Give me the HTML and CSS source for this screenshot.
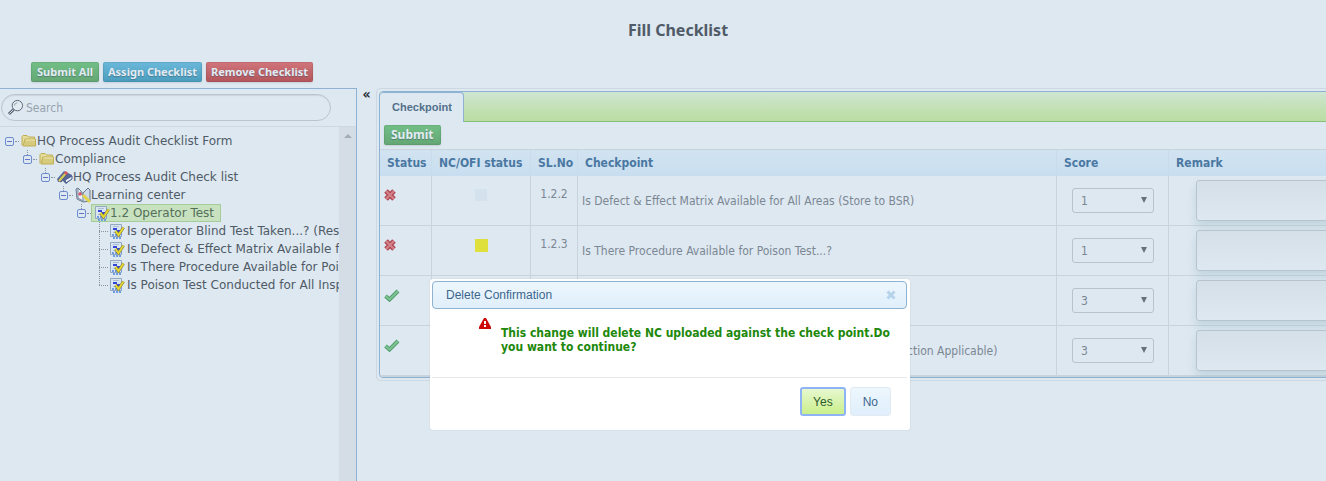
FILE: index.html
```html
<!DOCTYPE html>
<html lang="en">
<head>
    <meta charset="UTF-8">
    <meta name="viewport" content="width=device-width, initial-scale=1.0">
    <title>Fill Checklist</title>
    <link rel="stylesheet" href="styles.css">
</head>
<body>
    <!-- icon shapes shared by the tree and the table -->
    <svg class="sprite" aria-hidden="true">
        <symbol id="folder" viewBox="0 0 16 16">
            <path d="M1 12.500V3.500L2 2.500H6L7.500 4H13.500V6" fill="#e4dc9a" stroke="#bfae55"/>
            <path d="M2 13L4 6H14.500V13Z" fill="#d6ca7c" stroke="#bfae55"/>
            <path d="M4.500 7H14" stroke="#efe8b4"/>
        </symbol>
        <symbol id="book" viewBox="0 0 16 16">
            <path d="M0 10L7 2L15 6V10L9 15L6 12L1 13Z" fill="#596a9a"/>
            <path d="M8 11L15 7V10L9 14Z" fill="#e8edf4" stroke="#47598a"/>
            <path d="M1 11L8 4L10 5L4 13Z" fill="#7583a9" stroke="#505c78"/>
            <path d="M2 12L9 4" stroke="#d9cc56" stroke-width="2"/>
            <path d="M8 5L10 3" stroke="#d9535e" stroke-width="3"/>
        </symbol>
        <symbol id="openbook" viewBox="0 0 16 16">
            <path d="M1 2L3 1L8 6L13 1L15 3V14L8 15L2 12Z" fill="#cbd9e8" stroke="#69788e"/>
            <path d="M3 2V11L8 14V6" fill="#e8eff6" stroke="#7b8ba1"/>
            <path d="M5 5L11 11" stroke="#8b939d" stroke-width="2"/>
            <path d="M8 8L15 15" stroke="#e2d34a" stroke-width="3"/>
            <path d="M4 6L6 8" stroke="#dd5566" stroke-width="3"/>
        </symbol>
        <symbol id="check" viewBox="0 0 16 16">
            <path d="M1.500 1.500H12.500V13.500H1.500Z" fill="#d9e6f2" stroke="#93a9c1"/>
            <path d="M4 3.500H10M4 9.500H9" stroke="#a9bed4"/>
            <path d="M4 6H8M8 8H11" stroke="#3345d8" stroke-width="2"/>
            <path d="M3 12H13M4 15H12" stroke="#6f9be2" stroke-width="2" stroke-dasharray="2 1"/>
            <path d="M6.500 8L9.500 12L14.500 4.500" fill="none" stroke="#77743a" stroke-width="3"/>
            <path d="M6.500 8L9.500 12L14.500 4.500" fill="none" stroke="#e5d631" stroke-width="2"/>
        </symbol>
        <symbol id="cross" viewBox="0 0 12 12">
            <path d="M2 2L10 10M10 2L2 10" stroke="#b04a55" stroke-width="5"/>
            <path d="M2 2L10 10M10 2L2 10" stroke="#d5838a" stroke-width="2"/>
        </symbol>
        <symbol id="tick" viewBox="0 0 16 13">
            <path d="M1.500 7L5.500 10.500L14 2" fill="none" stroke="#559d70" stroke-width="4"/>
            <path d="M1.500 7L5.500 10.500L14 2" fill="none" stroke="#7cc592" stroke-width="2"/>
        </symbol>
    </svg>

    <div class="page">
        <h1>Fill Checklist</h1>

        <div class="actions">
            <button type="button" class="btn green">Submit All</button>
            <button type="button" class="btn blue">Assign Checklist</button>
            <button type="button" class="btn red">Remove Checklist</button>
        </div>

        <div class="layout">
            <aside class="sidebar">
                <div class="search">
                    <label for="search" aria-label="Search">
                        <svg class="lens" viewBox="0 0 18 18">
                            <circle cx="11" cy="7" r="5.500" fill="#e3ebf2" stroke="#566270"/>
                            <path d="M8 7Q8 4 11 4" fill="none" stroke="#8c99a6"/>
                            <path d="M7 11L2 16" stroke="#566270" stroke-width="3"/>
                            <path d="M6.500 11.500L2.500 15.500" stroke="#dee8f1"/>
                        </svg>
                    </label>
                    <input type="text" id="search" placeholder="Search">
                </div>
                <div class="tree-area">
                    <ul class="tree">
                        <li>
                            <div class="node"><button type="button" class="toggle" aria-label="Collapse"></button><svg class="icon"><use href="#folder"/></svg><span>HQ Process Audit Checklist Form</span></div>
                            <ul>
                                <li>
                                    <div class="node"><button type="button" class="toggle" aria-label="Collapse"></button><svg class="icon"><use href="#folder"/></svg><span>Compliance</span></div>
                                    <ul>
                                        <li>
                                            <div class="node"><button type="button" class="toggle" aria-label="Collapse"></button><svg class="icon"><use href="#book"/></svg><span>HQ Process Audit Check list</span></div>
                                            <ul>
                                                <li>
                                                    <div class="node"><button type="button" class="toggle" aria-label="Collapse"></button><svg class="icon"><use href="#openbook"/></svg><span>Learning center</span></div>
                                                    <ul>
                                                        <li>
                                                            <div class="node"><button type="button" class="toggle" aria-label="Collapse"></button><div class="selected"><svg class="icon"><use href="#check"/></svg><span>1.2 Operator Test</span></div></div>
                                                            <ul class="leaves">
                                                                <li class="node"><svg class="icon"><use href="#check"/></svg><span>Is operator Blind Test Taken...? (Result)</span></li>
                                                                <li class="node"><svg class="icon"><use href="#check"/></svg><span>Is Defect &amp; Effect Matrix Available for All Areas</span></li>
                                                                <li class="node"><svg class="icon"><use href="#check"/></svg><span>Is There Procedure Available for Poison Test...?</span></li>
                                                                <li class="node"><svg class="icon"><use href="#check"/></svg><span>Is Poison Test Conducted for All Inspectors</span></li>
                                                            </ul>
                                                        </li>
                                                    </ul>
                                                </li>
                                            </ul>
                                        </li>
                                    </ul>
                                </li>
                            </ul>
                        </li>
                    </ul>
                    <div class="scrollbar"><svg viewBox="0 0 8 4"><path d="M0 4L4 0L8 4Z" fill="#a3adb7"/></svg></div>
                </div>
            </aside>

            <button type="button" class="collapse" aria-label="Collapse panel">&laquo;</button>

            <main class="panel">
                <div class="panel-inner">
                    <div class="tabs"><a href="#checkpoints" class="tab">Checkpoint</a></div>
                    <div class="toolbar"><button type="button" class="btn green submit">Submit</button></div>
                    <table id="checkpoints">
                        <thead>
                            <tr>
                                <th class="col-status">Status</th>
                                <th class="col-nc">NC/OFI status</th>
                                <th class="col-no">SL.No</th>
                                <th class="col-point">Checkpoint</th>
                                <th class="col-score">Score</th>
                                <th>Remark</th>
                            </tr>
                        </thead>
                        <tbody>
                            <tr>
                                <td class="status"><svg class="cross"><use href="#cross"/></svg></td>
                                <td class="nc"><span class="flag"></span></td>
                                <td class="no">1.2.2</td>
                                <td>Is Defect &amp; Effect Matrix Available for All Areas (Store to BSR)</td>
                                <td class="score"><select aria-label="Score"><option>1</option><option>3</option></select></td>
                                <td class="remark"><textarea aria-label="Remark"></textarea></td>
                            </tr>
                            <tr>
                                <td class="status"><svg class="cross"><use href="#cross"/></svg></td>
                                <td class="nc"><span class="flag yellow"></span></td>
                                <td class="no">1.2.3</td>
                                <td>Is There Procedure Available for Poison Test...?</td>
                                <td class="score"><select aria-label="Score"><option>1</option><option>3</option></select></td>
                                <td class="remark"><textarea aria-label="Remark"></textarea></td>
                            </tr>
                            <tr>
                                <td class="status"><svg class="tick"><use href="#tick"/></svg></td>
                                <td class="nc"></td>
                                <td class="no"></td>
                                <td></td>
                                <td class="score"><select aria-label="Score"><option>3</option><option>1</option></select></td>
                                <td class="remark"><textarea aria-label="Remark"></textarea></td>
                            </tr>
                            <tr>
                                <td class="status"><svg class="tick"><use href="#tick"/></svg></td>
                                <td class="nc"></td>
                                <td class="no"></td>
                                <td>Is Poison Test Conducted for All Inspectors (Result and Correction Applicable)</td>
                                <td class="score"><select aria-label="Score"><option>3</option><option>1</option></select></td>
                                <td class="remark"><textarea aria-label="Remark"></textarea></td>
                            </tr>
                        </tbody>
                    </table>
                </div>
            </main>
        </div>
    </div>

    <div class="dialog" role="dialog" aria-labelledby="dialogTitle">
        <div class="dialog-title">
            <span id="dialogTitle">Delete Confirmation</span>
            <button type="button" class="close" aria-label="Close">
                <svg viewBox="0 0 10 10"><path d="M1.500 1.500L8.500 8.500M8.500 1.500L1.500 8.500" stroke="#b5d3ea" stroke-width="3"/></svg>
            </button>
        </div>
        <div class="dialog-body">
            <svg class="alert" viewBox="0 0 12 11">
                <path d="M5 0H7L12 9V11H0V9Z" fill="#cd0a0a"/>
                <path d="M5 3H7V6H5ZM5 7H7V9H5Z" fill="#fff"/>
            </svg>
            <p>This change will delete NC uploaded against the check point.Do you want to continue?</p>
        </div>
        <div class="dialog-buttons">
            <button type="button" class="yes">Yes</button>
            <button type="button" class="no-btn">No</button>
        </div>
    </div>
</body>
</html>
```
FILE: styles.css
```css
* {
    box-sizing: border-box;
}

body {
    margin: 0;
    height: 100vh;
    overflow: hidden;
    background-color: #dee8f1;
    color: #4f5b67;
    font-family: "DejaVu Sans Condensed", "DejaVu Sans", Tahoma, sans-serif;
    font-stretch: condensed;
    font-size: 12px;
}

button, input, select, textarea {
    font: inherit;
    color: inherit;
}

button {
    cursor: pointer;
}

.sprite {
    display: none;
}

/* the page runs a little wider than the window */
.page {
    display: flex;
    flex-direction: column;
    width: calc(100% + 30px);
    height: 100%;
}

h1 {
    margin: 0;
    padding: 20px 0 22px;
    font-family: "Noto Sans", sans-serif;
    font-size: 16px;
    line-height: 20px;
    text-align: center;
}

.actions {
    display: flex;
    gap: 4px;
    padding: 0 31px 6px;
}

.btn {
    height: 20px;
    padding: 0 5px;
    border: none;
    border-radius: 2px;
    color: #e2ebf3;
    font-family: "Noto Sans", sans-serif;
    font-stretch: normal;
    font-size: 11px;
    font-weight: bold;
    line-height: 20px;
    text-shadow: 0 1px 1px rgba(60, 80, 100, 0.5);
    box-shadow: inset 0 0 1px 1px rgba(0, 0, 0, 0.08), 0 1px 2px rgba(0, 0, 0, 0.1);
}

.green {
    background: linear-gradient(#72bf87, #64a774);
}

.actions .green {
    padding: 0 6px;
}

.blue {
    background: linear-gradient(#6bb9da, #4a9dbd);
}

.red {
    background: linear-gradient(#d0757b, #b3565c);
}

.layout {
    display: flex;
    flex: 1;
    align-items: flex-start;
    min-height: 0;
}

/* sidebar */
.sidebar {
    display: flex;
    flex-direction: column;
    flex: 0 0 357px;
    min-width: 0;
    height: 100%;
    border-top: 1px solid #8db2d2;
    border-right: 1px solid #8db2d2;
}

.search {
    display: flex;
    align-items: center;
    height: 27px;
    margin: 5px 25px 5px 1px;
    padding-left: 5px;
    border: 1px solid #b9c4cf;
    border-radius: 14px;
    box-shadow: inset 0 1px 1px rgba(0, 0, 0, 0.08);
}

.lens {
    display: block;
    width: 17px;
    height: 17px;
}

.search input {
    flex: 1;
    min-width: 0;
    padding: 0 2px;
    border: none;
    outline: none;
    background: none;
}

.search input::placeholder {
    color: #97a3ae;
}

.tree-area {
    display: flex;
    flex: 1;
    min-height: 0;
    border-top: 1px solid #cdd8e1;
}

ul {
    margin: 0;
    padding: 0;
    list-style: none;
}

.tree {
    flex: 1;
    min-width: 0;
    padding: 5px 0 0 5px;
    overflow: hidden;
    font-family: "DejaVu Sans", Verdana, sans-serif;
    font-stretch: normal;
}

.tree ul {
    padding-left: 18px;
}

.node {
    display: flex;
    align-items: center;
    height: 18px;
    white-space: nowrap;
}

.icon {
    flex: none;
    width: 16px;
    height: 16px;
}

.toggle {
    position: relative;
    flex: none;
    width: 9px;
    height: 9px;
    margin-right: 7px;
    padding: 0;
    border: 1px solid #6d8bd0;
    border-radius: 2px;
    background: linear-gradient(#6475c8, #6475c8) center / 5px 1px no-repeat;
}

/* dotted connector lines */
.toggle::after {
    content: "";
    position: absolute;
    left: 9px;
    top: 3px;
    width: 4px;
    border-top: 1px dotted #8a949e;
}

.tree ul .toggle::before {
    content: "";
    position: absolute;
    left: 3px;
    top: -6px;
    height: 5px;
    border-left: 1px dotted #8a949e;
}

.selected {
    display: flex;
    align-items: center;
    height: 18px;
    margin-left: -2px;
    padding: 0 6px 0 2px;
    border: 1px solid #a5cd9b;
    background-color: #c8e2c0;
    color: #55705a;
}

.tree .leaves {
    padding-left: 22px;
}

.leaves .node {
    gap: 2px;
    background:
        repeating-linear-gradient(90deg, #8a949e 0 1px, transparent 1px 2px) 0 9px / 10px 1px no-repeat,
        repeating-linear-gradient(#8a949e 0 1px, transparent 1px 2px) 0 0 / 1px 100% no-repeat;
    padding-left: 10px;
}

.leaves .node:last-child {
    background-size: 10px 1px, 1px 9px;
}

.scrollbar {
    display: flex;
    justify-content: center;
    flex: 0 0 17px;
    padding-top: 7px;
    background-color: #d4dde5;
}

.scrollbar svg {
    width: 8px;
    height: 4px;
}

.collapse {
    flex: 0 0 19px;
    padding: 0;
    border: none;
    background: none;
    color: #1f2a35;
    font-size: 14px;
    font-weight: bold;
    line-height: 12px;
}

/* main panel */
.panel {
    flex: 1;
    min-width: 0;
    padding: 2px;
    border: 1px solid #cdd8e3;
    border-radius: 4px;
}

.panel-inner {
    border: 1px solid #8db2d2;
    border-radius: 4px;
    overflow: hidden;
}

.tabs {
    display: flex;
    height: 30px;
    background: linear-gradient(#cfe5d2, #c0e0ae 70%, #bbdda5);
    border-bottom: 1px solid #84c077;
}

.tab {
    height: 30px;
    padding: 0 11px 0 12px;
    border-right: 1px solid #8db2d2;
    border-top: 1px solid #8db2d2;
    border-radius: 4px 4px 0 0;
    background-color: #dde8f1;
    color: #52708a;
    font-family: "Liberation Sans", Arial, sans-serif;
    font-size: 11px;
    font-weight: bold;
    line-height: 28px;
    text-decoration: none;
}

.toolbar {
    padding: 3px 4px 4px;
    border-bottom: 1px solid #c7d3dd;
}

.submit {
    display: block;
    padding: 0 7px;
    font-size: 12px;
}

table {
    width: 100%;
    border-collapse: separate;
    border-spacing: 0;
    table-layout: fixed;
    border-bottom: 1px solid #c7d3dd;
}

th {
    height: 26px;
    padding: 0 7px;
    border-right: 1px solid #c8dcec;
    background: linear-gradient(#d2e3f0, #c8def0);
    color: #4a78a2;
    text-align: left;
    white-space: nowrap;
}

td {
    height: 50px;
    padding: 0 4px;
    border-right: 1px solid #c9d3dc;
    border-bottom: 1px solid #c9d3dc;
    color: #7b8793;
    white-space: nowrap;
}

.col-status {
    width: 52px;
}

.col-nc {
    width: 99px;
}

.col-no {
    width: 47px;
}

.col-point {
    width: 479px;
}

.col-score {
    width: 112px;
}

.status, .nc, .no {
    padding-top: 13px;
    vertical-align: top;
}

.nc, .no {
    text-align: center;
}

.no {
    padding-top: 11px;
}

.status svg, .flag {
    display: block;
}

.cross {
    width: 12px;
    height: 12px;
}

.tick {
    width: 16px;
    height: 13px;
}

.flag {
    width: 12px;
    height: 12px;
    margin: 0 auto;
    background-color: #d3e2ed;
}

.yellow {
    width: 13px;
    height: 13px;
    background-color: #dfe03c;
}

.score {
    padding: 0 15px;
}

select {
    display: block;
    appearance: none;
    width: 82px;
    height: 25px;
    padding: 1px 8px 0;
    border: 1px solid #b7c3cd;
    border-radius: 3px;
    background: url("data:image/svg+xml,%3Csvg xmlns='http://www.w3.org/2000/svg' viewBox='0 0 6 6'%3E%3Cpath d='M0 0H6L3 6Z' fill='%2365717c'/%3E%3C/svg%3E") right 6px top 8px / 6px 6px no-repeat;
}

.remark {
    padding: 0 27px;
}

textarea {
    display: block;
    width: 100%;
    min-width: 180px;
    height: 41px;
    border: 1px solid #b7c3cd;
    border-radius: 3px;
    background: linear-gradient(#d5dfe8, #dde8f1);
    box-shadow: 0 6px 10px rgba(150, 185, 195, 0.4);
    resize: none;
}

/* confirmation dialog */
.dialog {
    position: absolute;
    left: calc(50% - 233px);
    top: 279px;
    width: 480px;
    padding: 2px 3px 14px 2px;
    border-radius: 3px;
    background-color: #fff;
    box-shadow: 0 0 2px rgba(0, 0, 0, 0.1);
    font-family: "Liberation Sans", Arial, sans-serif;
}

.dialog-title {
    display: flex;
    align-items: center;
    justify-content: space-between;
    height: 28px;
    padding: 0 10px 0 13px;
    border: 1px solid #8db2d2;
    border-radius: 4px;
    background: linear-gradient(#edf6fd, #dfeffb);
    color: #3c668d;
}

.close {
    padding: 0;
    border: none;
    background: none;
}

.close svg {
    display: block;
    width: 10px;
    height: 10px;
}

.dialog-body {
    display: flex;
    align-items: flex-start;
    gap: 10px;
    height: 68px;
    padding: 9px 10px 0 47px;
}

.alert {
    flex: none;
    width: 12px;
    height: 11px;
}

.dialog-body p {
    margin: 8px 0 0;
    color: #20880a;
    font-family: "DejaVu Sans Condensed", "DejaVu Sans", Tahoma, sans-serif;
    font-weight: bold;
    line-height: 14px;
}

.dialog-buttons {
    display: flex;
    justify-content: flex-end;
    gap: 4px;
    padding: 9px 16px 0;
    border-top: 1px solid #e6e8ea;
}

.dialog-buttons button {
    height: 29px;
    border-radius: 3px;
}

.yes {
    padding: 0 11px;
    border: 2px solid #8fb4f5;
    background: linear-gradient(#e6f8cf, #cbef8c);
    color: #2f5a2c;
}

.no-btn {
    padding: 0 12px;
    border: 1px solid #e3ebf2;
    background: linear-gradient(#edf6fd, #dfeffb);
    color: #3c668d;
}
```
